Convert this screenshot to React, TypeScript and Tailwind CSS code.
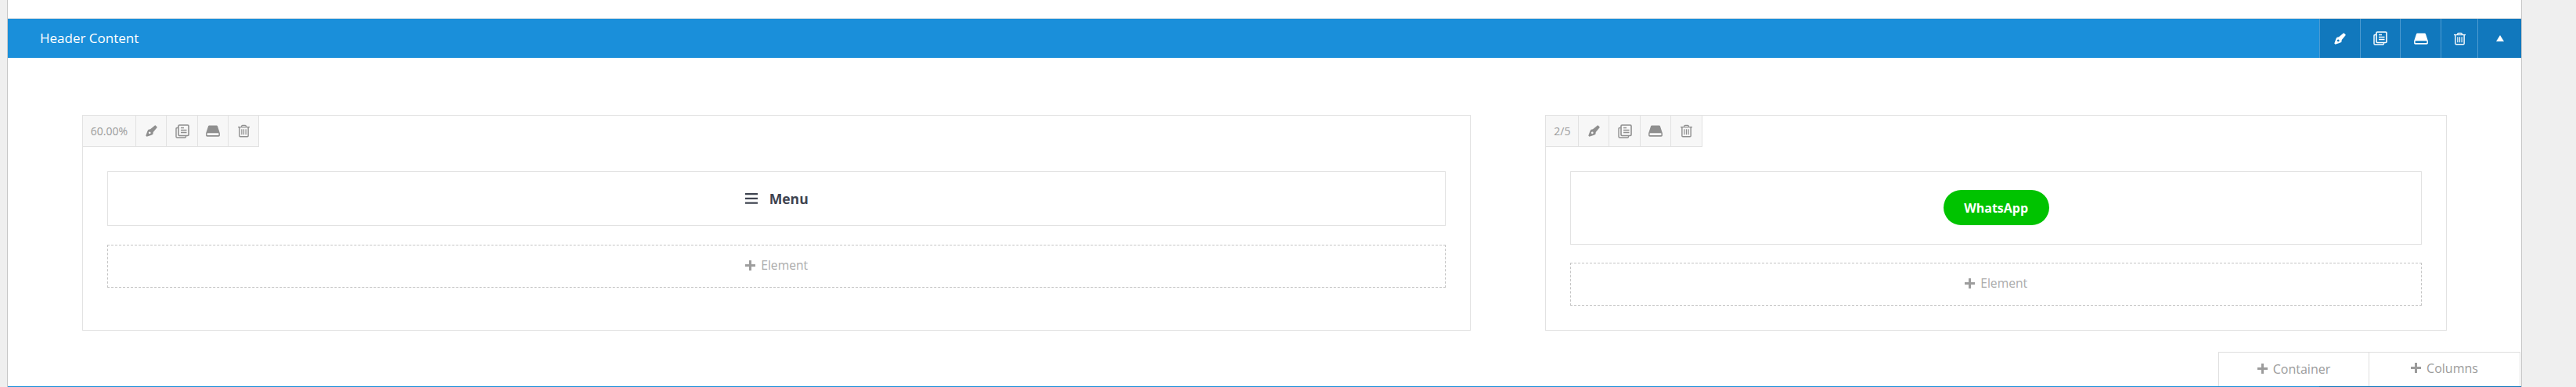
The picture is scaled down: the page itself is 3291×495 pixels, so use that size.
const font = "font-['Open_Sans',sans-serif]";

function PenIcon({ className }: { className?: string }) {
  return (
    <svg viewBox="0 0 16 16" className={className} fill="currentColor">
      <path fillRule="evenodd" d="M12.6.5c.3-.3.6-.3.9 0l2 2c.3.3.3.6 0 .9L10.4 9.6 10 12.4 8 13.6 1.6 15.7.3 14.4 2.6 8l1.2-2 2.6-.4zM5.4 9a1.5 1.5 0 1 0 1.6 1.7A1.5 1.5 0 0 0 5.4 9z" />
    </svg>
  );
}

function CopyIcon({ className }: { className?: string }) {
  return (
    <svg viewBox="0 0 18 18" className={className} fill="none" stroke="currentColor">
      <path d="M3.5 4.5H2.2C1.5 4.5 1 5 1 5.7v10.1c0 .7.5 1.2 1.2 1.2h10.1c.7 0 1.2-.5 1.2-1.2v-1.3" strokeWidth="1.4" />
      <rect x="4" y="1" width="13" height="13.5" rx="1.2" strokeWidth="1.6" />
      <path d="M7 4.5h4M7 7.5h7.5M7 10.5h7.5" strokeWidth="1.5" />
    </svg>
  );
}

function DriveIcon({ className }: { className?: string }) {
  return (
    <svg viewBox="0 0 18 15" className={className} fill="currentColor">
      <path fillRule="evenodd" d="M4.2.5h9.6c.5 0 .9.3 1.1.8l2.7 8.2c.2.4.3.8.3 1.2v2.4c0 1-.7 1.7-1.7 1.7H1.8c-1 0-1.7-.7-1.7-1.7v-2.4c0-.4.1-.8.3-1.2l2.7-8.2c.2-.5.6-.8 1.1-.8zM2.2 10.2c-.4 0-.7.3-.7.7v1.4c0 .4.3.7.7.7h13.6c.4 0 .7-.3.7-.7v-1.4c0-.4-.3-.7-.7-.7z" />
    </svg>
  );
}

function TrashIcon({ className }: { className?: string }) {
  return (
    <svg viewBox="0 0 16 17" className={className} fill="none" stroke="currentColor">
      <path d="M0 3.2h16" strokeWidth="1.4" />
      <path d="M5 3V1.8C5 1.2 5.4.8 6 .8h4c.6 0 1 .4 1 1V3" strokeWidth="1.3" />
      <path d="M2 3.2v12c0 .7.5 1.1 1.1 1.1h9.8c.6 0 1.1-.4 1.1-1.1v-12" strokeWidth="1.5" />
      <path d="M5.2 6v7.5M8 6v7.5M10.8 6v7.5" strokeWidth="1.3" />
    </svg>
  );
}

function PlusIcon({ className }: { className?: string }) {
  return (
    <svg viewBox="0 0 13 13" className={className} fill="currentColor">
      <path d="M5 0h3v5h5v3H8v5H5V8H0V5h5z" />
    </svg>
  );
}

function ColumnToolbar({ label, labelWidth, lastWidth }: { label: string; labelWidth: string; lastWidth: string }) {
  const cell = "flex items-center justify-center border-r border-[#e2e2e2] text-[#8f8f8f]";
  return (
    <div className="flex h-10 self-start border-b border-[#e2e2e2] bg-[#f7f7f7]">
      <div className={`${cell} ${labelWidth} text-[14px] text-[#9a9a9a]`}>{label}</div>
      <div className={`${cell} w-[39px]`}>
        <PenIcon className="h-[15px] w-[15px]" />
      </div>
      <div className={`${cell} w-10`}>
        <CopyIcon className="h-[18px] w-[18px]" />
      </div>
      <div className={`${cell} w-[39px]`}>
        <DriveIcon className="h-[15px] w-[18px]" />
      </div>
      <div className={`${cell} ${lastWidth}`}>
        <TrashIcon className="h-[17px] w-[15px]" />
      </div>
    </div>
  );
}

function AddElement() {
  return (
    <div className="flex h-[55px] items-center justify-center gap-[7px] border border-dashed border-[#c4c4c4] pb-[2px] text-[15.7px] text-[#ababab]">
      <PlusIcon className="h-[13px] w-[13px] text-[#9d9d9d]" />
      Element
    </div>
  );
}

function HeaderActions() {
  const cell = "flex items-center justify-center border-l border-[#4d9bd0]";
  return (
    <div className="flex h-full bg-[#1178bd] text-white">
      <div className={`${cell} w-[52px]`}>
        <PenIcon className="h-[15px] w-[15px]" />
      </div>
      <div className={`${cell} w-[51px]`}>
        <CopyIcon className="h-[18px] w-[18px]" />
      </div>
      <div className={`${cell} w-[52px]`}>
        <DriveIcon className="h-[15px] w-[18px]" />
      </div>
      <div className={`${cell} w-[47px]`}>
        <TrashIcon className="h-[17px] w-[15px]" />
      </div>
      <div className={`${cell} w-[56px]`}>
        <div className="h-0 w-0 border-x-[5px] border-b-[8px] border-x-transparent border-b-white" />
      </div>
    </div>
  );
}

export default function App() {
  return (
    <div className={`${font} h-[495px] w-[3291px] overflow-hidden bg-[#efefef] pl-[9px] pr-[69px]`}>
      <div className="flex h-full flex-col border-x border-[#c8c8c8] bg-white pt-[23px]">
        {/* Section bar */}
        <div className="flex h-[51px] items-center justify-between border-t border-[#e5e5e5] bg-[#1a8fda]">
          <span className="pl-[41px] text-[17px] text-white">Header Content</span>
          <HeaderActions />
        </div>

        {/* Columns */}
        <div className="flex gap-[95px] px-[95px] pt-[73px]">
          <div className="flex h-[276px] w-[1775px] flex-col border border-[#e2e2e2]">
            <ColumnToolbar label="60.00%" labelWidth="w-[68px]" lastWidth="w-[39px]" />
            <div className="flex flex-col gap-6 px-[31px] pt-[31px]">
              <div className="flex h-[70px] items-center justify-center gap-[15px] border border-[#e2e2e2] text-[17.6px] font-bold text-[#3f4450]">
                <svg viewBox="0 0 16 14" className="h-[14px] w-4" fill="currentColor">
                  <path d="M0 0h16v2.2H0zM0 5.8h16V8H0zM0 11.6h16v2.2H0z" />
                </svg>
                Menu
              </div>
              <AddElement />
            </div>
          </div>

          <div className="flex h-[276px] w-[1152px] flex-col border border-[#e2e2e2]">
            <ColumnToolbar label="2/5" labelWidth="w-[42px]" lastWidth="w-10" />
            <div className="flex flex-col gap-[23px] px-[31px] pt-[31px]">
              <div className="flex h-[94px] items-center justify-center border border-[#e2e2e2] pb-px">
                <button className="h-[45px] w-[135px] rounded-full bg-[#00c300] text-[16px] font-bold text-white">
                  WhatsApp
                </button>
              </div>
              <AddElement />
            </div>
          </div>
        </div>

        {/* Add buttons */}
        <div className="mt-[27px] flex justify-end pr-px">
          <div className="flex h-11 w-[193px] items-center justify-center gap-[7px] border border-b-0 border-[#dedede] pb-[2px] text-[16px] text-[#9b9b9b]">
            <PlusIcon className="h-[13px] w-[13px]" />
            Container
          </div>
          <div className="flex h-11 w-[193px] items-center justify-center gap-[7px] border border-b-0 border-l-0 border-[#dedede] pb-1 text-[16px] text-[#9b9b9b]">
            <PlusIcon className="h-[13px] w-[13px]" />
            Columns
          </div>
        </div>

        {/* Next section, cut off by the window */}
        <div className="flex h-px justify-end bg-[#1a8fda]">
          <div className="h-px w-[258px] bg-[#1178bd]" />
        </div>
      </div>
    </div>
  );
}
